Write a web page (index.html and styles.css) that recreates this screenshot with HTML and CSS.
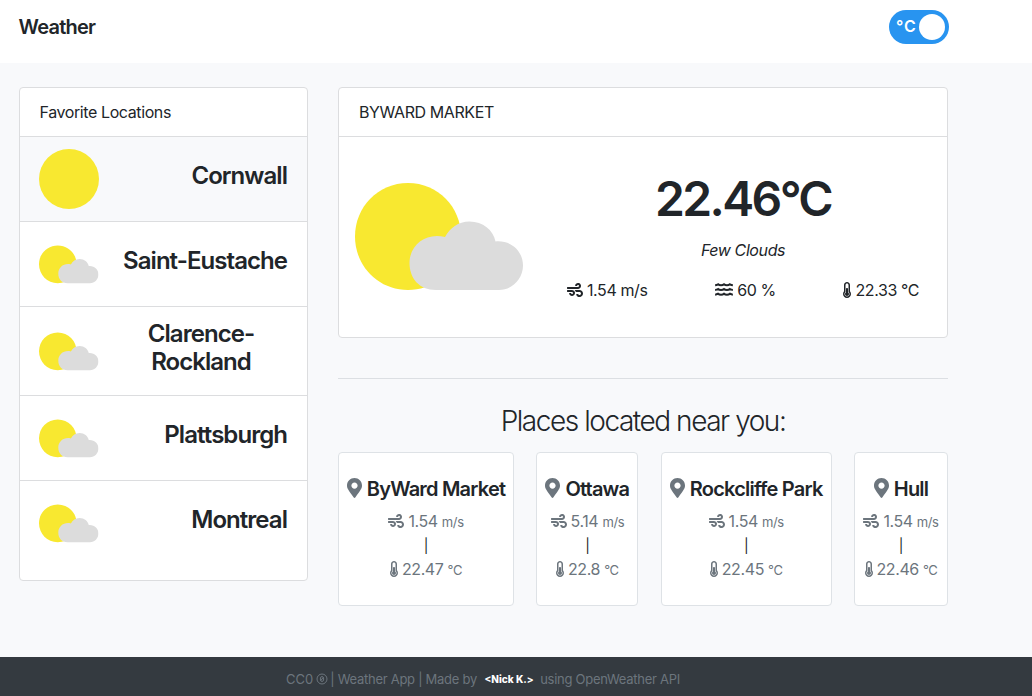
FILE: index.html
```html
<!DOCTYPE html>
<html lang="en">
<head>
<meta charset="utf-8">
<title>Weather</title>
<link rel="stylesheet" href="styles.css">
</head>
<body>
<svg class="defs" width="0" height="0">
  <symbol id="wind" viewBox="0 0 512 512"><path d="M156.7 256H16c-8.800 0-16 7.200-16 16v32c0 8.800 7.200 16 16 16h142.200c15.900 0 30.800 10.900 33.400 26.600 3.300 20-12.100 37.400-31.600 37.400-14.100 0-26.100-9.200-30.400-21.900-2.100-6.300-8.600-10.100-15.200-10.100H81.600c-9.800 0-17.700 8.800-15.900 18.400 8.600 44.100 47.600 77.600 94.200 77.600 57.100 0 102.700-50.100 95.200-108.600C249 291 205.400 256 156.700 256zM16 224h336c59.700 0 106.800-54.800 93.800-116.700-7.600-36.200-36.900-65.500-73.100-73.100-55.400-11.600-105.100 24.900-114.900 75.500-1.900 9.600 6.100 18.300 15.800 18.300h32.800c6.700 0 13.100-3.800 15.200-10.100C325.900 105.200 337.900 96 352 96c19.400 0 34.900 17.400 31.600 37.400-2.600 15.700-17.400 26.600-33.400 26.600H16c-8.800 0-16 7.200-16 16v32c0 8.800 7.200 16 16 16zm384 32H243.700c19.300 16.600 33.200 38.800 39.800 64H400c26.500 0 48 21.500 48 48s-21.500 48-48 48c-17.900 0-33.300-9.900-41.600-24.400-2.900-5-8.700-7.600-14.500-7.600h-33.800c-10.900 0-19 10.800-15.300 21.100 17.800 50.600 70.500 84.800 129.400 72.300 41.200-8.700 75.100-41.600 84.700-82.700C526 321.500 470.500 256 400 256z"/></symbol>
  <symbol id="thermo" viewBox="0 0 256 512"><path d="M192 384c0 35.346-28.654 64-64 64s-64-28.654-64-64c0-23.685 12.876-44.349 32-55.417V224c0-17.673 14.327-32 32-32s32 14.327 32 32v104.583c19.124 11.068 32 31.732 32 55.417zm32-84.653c19.912 22.563 32 52.194 32 84.653 0 70.696-57.303 128-128 128-.299 0-.609-.001-.909-.003C56.789 511.509-.357 453.636.002 383.333.166 351.135 12.217 321.756 32 299.347V96c0-53.019 42.981-96 96-96s96 42.981 96 96v203.347zM208 384c0-34.339-19.370-52.190-32-66.502V96c0-26.467-21.533-48-48-48S80 69.533 80 96v221.498c-12.732 14.428-31.825 32.100-31.999 66.080-.224 43.876 35.563 80.116 79.423 80.420L128 464c44.112 0 80-35.888 80-80z"/></symbol>
  <symbol id="water" viewBox="0 0 576 512"><path fill="none" stroke="currentColor" stroke-width="64" d="M4 106C50 102 75 88 99 74C145 117 240 117 288 74C335 117 430 117 477 74C501 88 526 102 572 106M4 256C50 252 75 238 99 224C145 267 240 267 288 224C335 267 430 267 477 224C501 238 526 252 572 256M4 406C50 402 75 388 99 374C145 417 240 417 288 374C335 417 430 417 477 374C501 388 526 402 572 406"/></symbol>
  <symbol id="pin" viewBox="0 0 384 512"><path d="M172.268 501.670C26.970 291.031 0 269.413 0 192 0 85.961 85.961 0 192 0s192 85.961 192 192c0 77.413-26.970 99.031-172.268 309.670-9.535 13.774-29.930 13.773-39.464 0zM192 272c44.183 0 80-35.817 80-80s-35.817-80-80-80-80 35.817-80 80 35.817 80 80 80z"/></symbol>
  <symbol id="clouds" viewBox="0 0 168 108"><path fill="#f8e830" d="M53 0C83 0 106 24 106 53.500S83 107 53 107 0 83 0 53.500 23 0 53 0z"/><path fill="#dcdcdc" d="M81 107C64 107 54.500 95 54.500 80C54.500 62 71 49 90 54C95 45 103 38.500 114.500 38.500C128 38.500 138 47 140.500 58.500C156 57 168 68 168 82.500C168 96 157 107 144 107z"/></symbol>
</svg>

<header class="topbar">
  <h1 class="brand">Weather</h1>
  <div class="switch"><span class="switch-label">°C</span><span class="knob"></span></div>
</header>

<main class="layout">
  <section class="card favorites">
    <div class="card-head">Favorite Locations</div>
    <div class="fav active"><span class="sun"></span><h2 class="fav-name">Cornwall</h2></div>
    <div class="fav"><svg class="fav-icon"><use href="#clouds"/></svg><h2 class="fav-name">Saint-Eustache</h2></div>
    <div class="fav tall"><svg class="fav-icon"><use href="#clouds"/></svg><h2 class="fav-name two-line">Clarence-<br>Rockland</h2></div>
    <div class="fav"><svg class="fav-icon"><use href="#clouds"/></svg><h2 class="fav-name">Plattsburgh</h2></div>
    <div class="fav last"><svg class="fav-icon"><use href="#clouds"/></svg><h2 class="fav-name">Montreal</h2></div>
  </section>

  <div class="content">
    <section class="card current">
      <div class="card-head place">BYWARD MARKET</div>
      <div class="current-body">
        <svg class="big-icon"><use href="#clouds"/></svg>
        <div class="readings">
          <div class="temp">22.46°C</div>
          <div class="summary">Few Clouds</div>
          <div class="stats">
            <span class="stat"><svg class="i-wind"><use href="#wind"/></svg>1.54 m/s</span>
            <span class="stat"><svg class="i-water"><use href="#water"/></svg>60 %</span>
            <span class="stat"><svg class="i-thermo"><use href="#thermo"/></svg>22.33 °C</span>
          </div>
        </div>
      </div>
    </section>

    <hr class="rule">
    <h2 class="near-title">Places located near you:</h2>

    <section class="near">
      <article class="card near-card w-market">
        <h3 class="near-name"><svg class="i-pin"><use href="#pin"/></svg><span>ByWard Market</span></h3>
        <div class="near-row"><svg class="i-wind"><use href="#wind"/></svg>1.54 <small>m/s</small></div>
        <div class="bar">|</div>
        <div class="near-row"><svg class="i-thermo"><use href="#thermo"/></svg>22.47 <small>°C</small></div>
      </article>
      <article class="card near-card w-ottawa">
        <h3 class="near-name"><svg class="i-pin"><use href="#pin"/></svg><span>Ottawa</span></h3>
        <div class="near-row"><svg class="i-wind"><use href="#wind"/></svg>5.14 <small>m/s</small></div>
        <div class="bar">|</div>
        <div class="near-row"><svg class="i-thermo"><use href="#thermo"/></svg>22.8 <small>°C</small></div>
      </article>
      <article class="card near-card w-park">
        <h3 class="near-name"><svg class="i-pin"><use href="#pin"/></svg><span>Rockcliffe Park</span></h3>
        <div class="near-row"><svg class="i-wind"><use href="#wind"/></svg>1.54 <small>m/s</small></div>
        <div class="bar">|</div>
        <div class="near-row"><svg class="i-thermo"><use href="#thermo"/></svg>22.45 <small>°C</small></div>
      </article>
      <article class="card near-card w-hull">
        <h3 class="near-name"><svg class="i-pin"><use href="#pin"/></svg><span>Hull</span></h3>
        <div class="near-row"><svg class="i-wind"><use href="#wind"/></svg>1.54 <small>m/s</small></div>
        <div class="bar">|</div>
        <div class="near-row"><svg class="i-thermo"><use href="#thermo"/></svg>22.46 <small>°C</small></div>
      </article>
    </section>
  </div>
</main>

<footer class="footer">
  <span>CC0</span>
  <svg class="cc0" viewBox="0 0 12 12"><circle cx="6" cy="6" r="5"/><ellipse cx="6" cy="6" rx="1.700" ry="2.500"/><path d="M4.900 7.500l2.200-3"/></svg>
  <span class="foot-text">| Weather App | Made by</span>
  <strong class="author">&lt;Nick K.&gt;</strong>
  <span class="foot-text">using OpenWeather API</span>
</footer>
</body>
</html>
```
FILE: styles.css
```css
* { box-sizing: border-box; }
body {
  margin: 0;
  height: 696px;
  display: flex;
  flex-direction: column;
  overflow: hidden;
  background: #f8f9fb;
  color: #212529;
  font: 16px/24px Inter, "Liberation Sans", sans-serif;
  letter-spacing: -0.4px;
}
h1, h2, h3 { margin: 0; font-weight: 560; }
svg { fill: currentColor; flex: none; }
.defs { position: absolute; }

.topbar {
  height: 63px;
  flex: none;
  padding: 10px 83px 0 18.5px;
  display: flex;
  justify-content: space-between;
  align-items: flex-start;
  background: #fff;
}
.brand { font-size: 20px; line-height: 34px; letter-spacing: -0.75px; }
.switch {
  width: 60px;
  height: 34px;
  padding: 0 4px 0 7px;
  display: flex;
  align-items: center;
  justify-content: space-between;
  border-radius: 17px;
  background: #2894f0;
  color: #fff;
}
.switch-label { font-weight: 600; font-size: 16px; line-height: 22px; letter-spacing: 0.8px; padding-bottom: 2px; }
.knob { width: 26px; height: 26px; border-radius: 50%; background: #fff; }

.layout { flex: 1; padding: 24px 84px 0 19px; display: flex; gap: 30px; align-items: flex-start; }
.card { border: 1px solid #dcdddf; border-radius: 4px; background: #fff; }
.card-head { height: 49px; padding: 12px 19.5px; border-bottom: 1px solid #dcdddf; }
.card-head.place { padding-left: 20px; }
.favorites { width: 289px; height: 494px; overflow: hidden; }
.fav {
  height: 85px;
  padding: 0 20px;
  display: flex;
  align-items: center;
  justify-content: space-between;
  border-bottom: 1px solid #dcdddf;
}
.fav.active { background: #f8f9fb; }
.fav.tall { height: 89px; }
.fav.last { border: 0; height: 84px; }
.sun { width: 60px; height: 60px; margin-left: -0.6px; border-radius: 50%; background: #f8e830; }
.fav-icon { width: 59.5px; height: 39px; margin-left: -0.6px; }
.fav-name { font-size: 24px; line-height: 28px; padding-bottom: 7px; letter-spacing: -0.95px; }
.two-line { width: 172px; text-align: center; }

.content { width: 610px; }
.current { height: 251px; }
.current-body { height: 200px; padding: 0 15px 0 16px; display: flex; }
.big-icon { width: 168px; height: 108px; margin-top: 46px; }
.readings { flex: 1; margin-left: 31px; text-align: center; }
.temp { margin-top: 33px; font-size: 48px; line-height: 58px; font-weight: 560; letter-spacing: -2.6px; }
.summary { margin-top: 10px; font-style: italic; }
.stats { margin-top: 16px; padding: 0 13px; display: flex; justify-content: space-between; }
.stat { display: flex; align-items: center; }
.i-wind { width: 16px; height: 16px; margin-right: 4px; }
.i-water { width: 18px; height: 16px; margin-right: 4px; }
.i-thermo { width: 8px; height: 16px; margin-right: 4px; }

.rule { margin: 40px 0 27px; border: 0; border-top: 1px solid #dcdfe3; }
.near-title { font-size: 28px; line-height: 30px; font-weight: 300; letter-spacing: -1.45px; text-align: center; }
.near { margin-top: 16px; display: flex; justify-content: space-between; }
.near-card { height: 154px; padding-top: 24px; display: flex; flex-direction: column; align-items: center; border-color: #dee2e6; }
.w-market { width: 176px; }
.w-ottawa { width: 102px; }
.w-park { width: 171px; }
.w-hull { width: 94px; }
.near-name { display: flex; align-items: center; font-size: 20px; line-height: 24px; letter-spacing: -0.8px; white-space: nowrap; }
.i-pin { width: 15px; height: 20px; margin: 0 5px 2px 0; color: #6c757d; }
.near-row { display: flex; align-items: center; height: 24px; margin-top: 8px; color: #6c757d; white-space: pre; }
.bar { height: 24px; padding-top: 1px; font-size: 14px; margin-bottom: -8px; }
small { font-size: 13px; padding-top: 2px; }

.footer {
  height: 39px;
  flex: none;
  padding: 4px 0 0 286px;
  display: flex;
  align-items: center;
  background: #343a40;
  color: #6c757d;
  font-size: 13px;
  letter-spacing: 0;
  white-space: nowrap;
}
.cc0 { width: 12px; height: 12px; margin: 0 2px 0 3px; fill: none; stroke: currentColor; }
.foot-text { letter-spacing: -0.27px; }
.author { margin: 1px 6.5px 0 7.5px; color: #fff; font-size: 10px; font-weight: 800; }
```
